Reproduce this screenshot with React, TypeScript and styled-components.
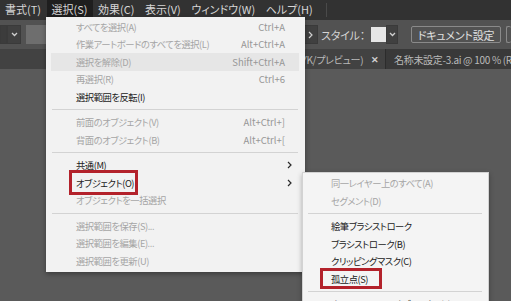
import React from "react";
import styled, { createGlobalStyle } from "styled-components";

const JP = `"Noto Sans CJK JP", "Noto Sans", sans-serif`;

const GlobalStyle = createGlobalStyle`
  html, body { margin: 0; padding: 0; background: #5a5a5a; }
  body { overflow: hidden; font-family: ${JP}; }
`;

const Screen = styled.div`
  position: relative;
  width: 511px;
  height: 301px;
  overflow: hidden;
  display: flex;
  flex-direction: column;
  background: #5a5a5a;
  font-family: ${JP};
  font-feature-settings: "palt" 1;
`;

/* ---------- menu bar ---------- */
const MenuBar = styled.div`
  height: 20px;
  flex-shrink: 0;
  display: flex;
  align-items: flex-start;
  background: #323232;
`;

const BarItem = styled.div<{ $active?: boolean }>`
  height: 17px;
  display: flex;
  align-items: center;
  padding: 0 5.5px 0 5px;
  font-size: 11px;
  color: #d6d6d6;
  white-space: nowrap;
  background: ${(p) => (p.$active ? "#1e1e1e" : "transparent")};
`;

const BarDivider = styled.div`
  width: 1px;
  height: 14px;
  margin: 3px 0 0 8px;
  background: #4a4a4a;
`;

/* ---------- tool bar ---------- */
const ToolBar = styled.div`
  height: 29px;
  flex-shrink: 0;
  display: flex;
  align-items: center;
  background: #525252;
`;

const Field = styled.div<{ $w: number; $bg: string }>`
  width: ${(p) => p.$w}px;
  height: 19px;
  flex-shrink: 0;
  box-sizing: border-box;
  background: ${(p) => p.$bg};
  border: 1px solid #3a3a3a;
`;

const ChevronBox = styled.div<{ $w: number }>`
  width: ${(p) => p.$w}px;
  height: 19px;
  flex-shrink: 0;
  box-sizing: border-box;
  display: flex;
  align-items: center;
  justify-content: center;
  background: #404040;
  border: 1px solid #3a3a3a;
`;

const WideField = styled.div`
  flex: 1;
  height: 19px;
  margin-left: 5px;
  background: #6e6e6e;
`;

const RightGroup = styled.div`
  display: flex;
  align-items: center;
  flex-shrink: 0;
`;

const ToolLabel = styled.span`
  margin: 0 6px 0 3px;
  font-size: 11px;
  letter-spacing: -0.2px;
  color: #d4d4d4;
  white-space: nowrap;
`;

const Swatch = styled.div`
  width: 15px;
  height: 15px;
  background: #e6e6e6;
`;

const ToolButton = styled.div<{ $partial?: boolean }>`
  height: 17px;
  box-sizing: border-box;
  display: flex;
  align-items: center;
  justify-content: center;
  flex-shrink: 0;
  width: ${(p) => (p.$partial ? "5px" : "90px")};
  margin-left: ${(p) => (p.$partial ? "5px" : "13px")};
  border: 1px solid #8a8a8a;
  border-right: ${(p) => (p.$partial ? "none" : "1px solid #8a8a8a")};
  border-radius: 2px;
  font-size: 11px;
  letter-spacing: -0.2px;
  color: #e0e0e0;
  white-space: nowrap;
`;

/* ---------- tab bar ---------- */
const TabBar = styled.div`
  height: 20px;
  flex-shrink: 0;
  display: flex;
  background: #393939;
`;

const Tab = styled.div<{ $active?: boolean; $w?: number }>`
  display: flex;
  align-items: center;
  justify-content: ${(p) => (p.$active ? "flex-end" : "flex-start")};
  flex-shrink: 0;
  width: ${(p) => (p.$w ? `${p.$w}px` : "auto")};
  padding: ${(p) => (p.$active ? "0 6px 0 0" : "0 0 0 8px")};
  box-sizing: border-box;
  background: ${(p) => (p.$active ? "#424242" : "transparent")};
  border-right: ${(p) => (p.$active ? "1px solid #2c2c2c" : "none")};
  font-size: 10px;
  letter-spacing: -0.3px;
  color: #b9b9b9;
  white-space: nowrap;
`;

const TabClose = styled.span`
  margin-left: 8px;
  font-size: 9px;
  font-weight: bold;
  color: #cfcfcf;
`;

const Canvas = styled.div`
  flex: 1;
  background: #5a5a5a;
`;

/* ---------- dropdown menus ---------- */
const Dropdown = styled.div`
  position: absolute;
  left: 46px;
  top: 17px;
  width: 259px;
  box-sizing: border-box;
  padding: 1px 0 2.5px;
  background: #f2f2f2;
  box-shadow: 0 2px 5px rgba(0, 0, 0, 0.35);
`;

const SubMenu = styled.div`
  position: absolute;
  left: 302px;
  top: 172px;
  width: 187px;
  box-sizing: border-box;
  padding: 1.5px 0 4px;
  background: #f4f4f4;
  border: 1px solid #d2d2d2;
  box-shadow: 0 2px 5px rgba(0, 0, 0, 0.3);
`;

const Row = styled.div<{ $disabled?: boolean; $hover?: boolean; $pl: number }>`
  position: relative;
  height: 17.5px;
  margin: 0 6px 0 5px;
  padding: 0 7px 0 ${(p) => p.$pl}px;
  display: flex;
  align-items: center;
  justify-content: space-between;
  font-size: 9.3px;
  letter-spacing: -0.45px;
  white-space: nowrap;
  color: ${(p) => (p.$disabled ? "#a5a5a5" : "#1a1a1a")};
  background: ${(p) => (p.$hover ? "#e6e6e6" : "transparent")};
`;

const Shortcut = styled.span`
  margin-right: 7px;
  font-size: 9.5px;
  letter-spacing: 0;
  color: #979797;
`;

const Sep = styled.div<{ $ml: number; $mr: number }>`
  height: 8px;
  margin: 0 ${(p) => p.$mr}px 0 ${(p) => p.$ml}px;
  display: flex;
  align-items: center;
  &::after {
    content: "";
    flex: 1;
    height: 1px;
    background: #d3d3d3;
  }
`;

const RedMark = styled.div<{ $l: number; $t: number; $w: number; $h: number }>`
  position: absolute;
  left: ${(p) => p.$l}px;
  top: ${(p) => p.$t}px;
  width: ${(p) => p.$w}px;
  height: ${(p) => p.$h}px;
  box-sizing: border-box;
  border: 3px solid #b3222b;
  pointer-events: none;
`;

const Chevron = ({ dir, color }: { dir: "down" | "right"; color: string }) =>
  dir === "down" ? (
    <svg width="7" height="5" viewBox="0 0 7 5">
      <path d="M1 1 L3.5 3.5 L6 1" fill="none" stroke={color} strokeWidth="1.3" />
    </svg>
  ) : (
    <svg width="5" height="8" viewBox="0 0 5 8">
      <path d="M1 1 L4 4 L1 7" fill="none" stroke={color} strokeWidth="1.2" />
    </svg>
  );

type Item =
  | { sep: true }
  | {
      sep?: false;
      label: string;
      key?: string;
      disabled?: boolean;
      hover?: boolean;
      sub?: boolean;
      mark?: { l: number; t: number; w: number; h: number };
    };

const mainItems: Item[] = [
  { label: "すべてを選択(A)", key: "Ctrl+A", disabled: true },
  { label: "作業アートボードのすべてを選択(L)", key: "Alt+Ctrl+A", disabled: true },
  { label: "選択を解除(D)", key: "Shift+Ctrl+A", disabled: true, hover: true },
  { label: "再選択(R)", key: "Ctrl+6", disabled: true },
  { label: "選択範囲を反転(I)" },
  { sep: true },
  { label: "前面のオブジェクト(V)", key: "Alt+Ctrl+]", disabled: true },
  { label: "背面のオブジェクト(B)", key: "Alt+Ctrl+[", disabled: true },
  { sep: true },
  { label: "共通(M)", sub: true },
  { label: "オブジェクト(O)", sub: true, mark: { l: 18, t: -4, w: 69, h: 25 } },
  { label: "オブジェクトを一括選択", disabled: true },
  { sep: true },
  { label: "選択範囲を保存(S)...", disabled: true },
  { label: "選択範囲を編集(E)...", disabled: true },
  { label: "選択範囲を更新(U)", disabled: true },
];

const subItems: Item[] = [
  { label: "同一レイヤー上のすべて(A)", disabled: true },
  { label: "セグメント(D)", disabled: true },
  { sep: true },
  { label: "絵筆ブラシストローク" },
  { label: "ブラシストローク(B)" },
  { label: "クリッピングマスク(C)" },
  { label: "孤立点(S)", mark: { l: 12, t: -2, w: 62, h: 21 } },
  { sep: true },
  { label: "すべてのテキストオブジェクト(X)" },
];

const renderItems = (items: Item[], pl: number, sepL: number, sepR: number) =>
  items.map((it, i) =>
    it.sep ? (
      <Sep key={i} $ml={sepL} $mr={sepR} />
    ) : (
      <Row key={i} $pl={pl} $disabled={it.disabled} $hover={it.hover}>
        <span>{it.label}</span>
        {it.key && <Shortcut>{it.key}</Shortcut>}
        {it.sub && <Chevron dir="right" color="#2a2a2a" />}
        {it.mark && <RedMark $l={it.mark.l} $t={it.mark.t} $w={it.mark.w} $h={it.mark.h} />}
      </Row>
    )
  );

const barItems = ["書式(T)", "選択(S)", "効果(C)", "表示(V)", "ウィンドウ(W)", "ヘルプ(H)"];

export default function App() {
  return (
    <>
      <GlobalStyle />
      <Screen>
        <MenuBar>
          {barItems.map((b) => (
            <BarItem key={b} $active={b === "選択(S)"}>
              {b}
            </BarItem>
          ))}
          <BarDivider />
        </MenuBar>

        <ToolBar>
          <Field $w={7} $bg="#3c3c3c" />
          <ChevronBox $w={14}>
            <Chevron dir="down" color="#d0d0d0" />
          </ChevronBox>
          <WideField />
          <RightGroup>
            <ChevronBox $w={16}>
              <Chevron dir="right" color="#d0d0d0" />
            </ChevronBox>
            <ToolLabel>スタイル：</ToolLabel>
            <Swatch />
            <ChevronBox $w={12}>
              <Chevron dir="down" color="#d0d0d0" />
            </ChevronBox>
            <ToolButton>ドキュメント設定</ToolButton>
            <ToolButton $partial />
          </RightGroup>
        </ToolBar>

        <TabBar>
          <Tab $active $w={386}>
            名称未設定-1* @ 100 % (CMYK/プレビュー)
            <TabClose>✕</TabClose>
          </Tab>
          <Tab>名称未設定-3.ai @ 100 % (RGB/プレビュー)</Tab>
        </TabBar>

        <Canvas />

        <Dropdown>{renderItems(mainItems, 25, 6, 7)}</Dropdown>
        <SubMenu>{renderItems(subItems, 23, 5, 6)}</SubMenu>
      </Screen>
    </>
  );
}
